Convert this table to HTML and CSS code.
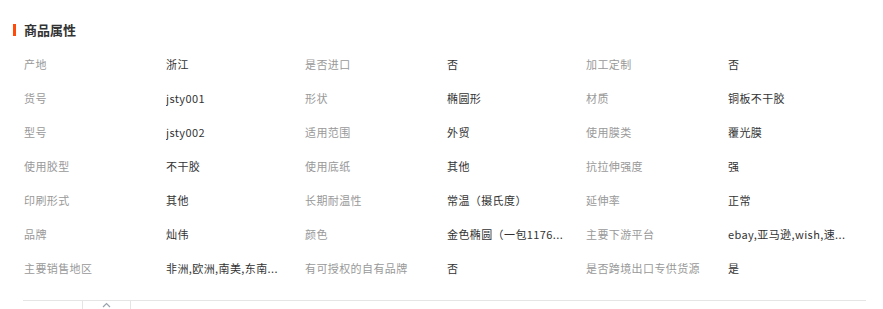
FILE: index.html
```html
<!DOCTYPE html>
<html lang="zh-CN">
<head>
<meta charset="utf-8">
<title>商品属性</title>
<link rel="stylesheet" href="styles.css">
</head>
<body>
<div class="panel">
  <h2 class="title"><span class="bar"></span>商品属性</h2>
  <div class="grid">
    <div class="cell"><span class="label">产地</span><span class="value">浙江</span></div>
    <div class="cell"><span class="label">是否进口</span><span class="value">否</span></div>
    <div class="cell"><span class="label">加工定制</span><span class="value">否</span></div>

    <div class="cell"><span class="label">货号</span><span class="value">jsty001</span></div>
    <div class="cell"><span class="label">形状</span><span class="value">椭圆形</span></div>
    <div class="cell"><span class="label">材质</span><span class="value">铜板不干胶</span></div>

    <div class="cell"><span class="label">型号</span><span class="value">jsty002</span></div>
    <div class="cell"><span class="label">适用范围</span><span class="value">外贸</span></div>
    <div class="cell"><span class="label">使用膜类</span><span class="value">覆光膜</span></div>

    <div class="cell"><span class="label">使用胶型</span><span class="value">不干胶</span></div>
    <div class="cell"><span class="label">使用底纸</span><span class="value">其他</span></div>
    <div class="cell"><span class="label">抗拉伸强度</span><span class="value">强</span></div>

    <div class="cell"><span class="label">印刷形式</span><span class="value">其他</span></div>
    <div class="cell"><span class="label">长期耐温性</span><span class="value">常温（摄氏度）</span></div>
    <div class="cell"><span class="label">延伸率</span><span class="value">正常</span></div>

    <div class="cell"><span class="label">品牌</span><span class="value">灿伟</span></div>
    <div class="cell"><span class="label">颜色</span><span class="value">金色椭圆（一包1176...</span></div>
    <div class="cell"><span class="label">主要下游平台</span><span class="value">ebay,亚马逊,wish,速...</span></div>

    <div class="cell"><span class="label">主要销售地区</span><span class="value">非洲,欧洲,南美,东南...</span></div>
    <div class="cell"><span class="label">有可授权的自有品牌</span><span class="value">否</span></div>
    <div class="cell"><span class="label">是否跨境出口专供货源</span><span class="value">是</span></div>
  </div>
  <div class="footer">
    <div class="toggle">
      <svg width="9" height="6" viewBox="0 0 9 6"><path d="M1 5 L4.5 1.5 L8 5" fill="none" stroke="#9aa3ad" stroke-width="1.2"/></svg>
    </div>
  </div>
</div>
</body>
</html>
```

FILE: styles.css
```css
html, body {
  margin: 0;
  padding: 0;
  background: #fff;
}
body {
  font-family: "Noto Sans CJK SC", "Microsoft YaHei", sans-serif;
  color: #333;
}
.panel {
  padding: 21px 0 0 13px;
  width: 870px;
  box-sizing: border-box;
}
.title {
  display: flex;
  align-items: center;
  margin: 0;
  font-size: 13px;
  font-weight: bold;
  line-height: 18px;
  color: #333;
}
.bar {
  display: inline-block;
  width: 3px;
  height: 12px;
  background: #ff4a0a;
  margin-right: 8px;
}
.grid {
  display: grid;
  grid-template-columns: 281px 281px 281px;
  margin: 8px 0 0 11px;
}
.cell {
  display: flex;
  height: 34px;
  align-items: center;
  font-size: 11px;
  letter-spacing: 0.4px;
  line-height: 16px;
}
.label {
  width: 142px;
  flex: none;
  color: #999;
}
.value {
  color: #333;
  white-space: nowrap;
  overflow: hidden;
  max-width: 130px;
}
.footer {
  margin: 15px 0 0 10px;
  width: 843px;
  border-top: 1px solid #e5e5e5;
  display: flex;
}
.toggle {
  margin-left: 59px;
  width: 47px;
  height: 8px;
  border-left: 1px solid #e5e5e5;
  border-right: 1px solid #e5e5e5;
  display: flex;
  justify-content: center;
  align-items: flex-start;
  padding-top: 1px;
}
.toggle svg {
  display: block;
}
```
